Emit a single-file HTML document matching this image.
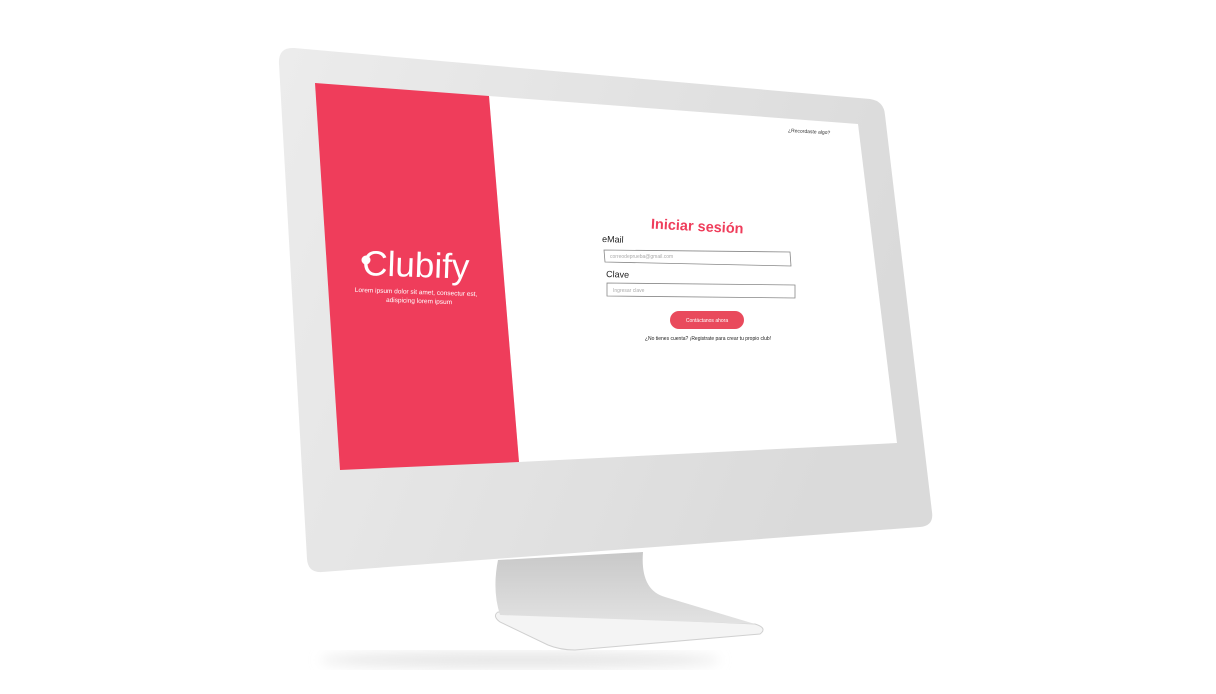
<!DOCTYPE html>
<html><head><meta charset="utf-8"><style>
html,body{margin:0;padding:0;background:#fff;width:1216px;height:694px;overflow:hidden}
svg{display:block}
text{font-family:"Liberation Sans",sans-serif}
</style></head><body>
<svg width="1216" height="694" viewBox="0 0 1216 694">
<defs>
<linearGradient id="bz" x1="0" y1="0" x2="1" y2="0.3">
<stop offset="0" stop-color="#ececec"/><stop offset="1" stop-color="#dadada"/></linearGradient>
<linearGradient id="nk" x1="0" y1="0" x2="0" y2="1">
<stop offset="0" stop-color="#c8c8c8"/><stop offset="1" stop-color="#e2e2e2"/></linearGradient>
<filter id="bl"><feGaussianBlur stdDeviation="6"/></filter>
</defs>
<ellipse cx="520" cy="660" rx="200" ry="8" fill="#e6e6e6" filter="url(#bl)"/>
<path d="M498 612 L755 624 Q768 628 760 634 L575 650 Q560 650 548 645 L500 622 Q492 616 498 612Z" fill="#f4f4f4" stroke="#d0d0d0" stroke-width="1"/>
<path d="M498 560 L643 552 Q640 590 665 597 L755 624 L500 615 Q492 590 498 560Z" fill="url(#nk)"/>
<path d="M294 48 L870 99 Q884 101 885 115 L932 512 Q934 526 920 527 L322 572 Q308 573 307 559 L279 64 Q278 47 294 48Z" fill="url(#bz)"/>
<polygon points="489,96 858,124 897,443 519,462" fill="#fff"/>
<polygon points="315,83 489,96 519,462 340,470" fill="#ef3d5b"/>
<text x="362" y="275" font-size="35" fill="#fff" transform="rotate(2 362 275)">Clubify</text>
<circle cx="366" cy="260" r="4.5" fill="#fff"/>
<text x="416" y="294" font-size="6.5" fill="#fff" text-anchor="middle" transform="rotate(2 416 294)">Lorem ipsum dolor sit amet, consectur est,</text>
<text x="419" y="303" font-size="6.5" fill="#fff" text-anchor="middle" transform="rotate(2 419 303)">adispicing lorem ipsum</text>

<text x="788" y="132" font-size="5" fill="#333" transform="rotate(3 788 132)">¿Recordaste algo?</text>
<text x="697" y="231" font-size="14.5" font-weight="bold" fill="#ef3d5b" text-anchor="middle" transform="rotate(3 697 231)">Iniciar sesión</text>
<text x="602" y="242" font-size="9" fill="#222" transform="rotate(2 602 242)">eMail</text>
<path d="M604 250 L790 252 L791 266 L605 262 Z" fill="#fff" stroke="#888" stroke-width="0.8"/>
<text x="610" y="258" font-size="5" fill="#aaa">correodeprueba@gmail.com</text>
<text x="606" y="277" font-size="9" fill="#222" transform="rotate(2 606 277)">Clave</text>
<path d="M607 283 L795 285 L795 298 L607 296 Z" fill="#fff" stroke="#888" stroke-width="0.8"/>
<text x="613" y="292" font-size="5" fill="#aaa">Ingresar clave</text>
<rect x="670" y="311" width="74" height="18" rx="9" fill="#e94a5c"/>
<text x="707" y="322" font-size="5" fill="#fff" text-anchor="middle">Contáctanos ahora</text>
<text x="708" y="340" font-size="5" fill="#222" text-anchor="middle">¿No tienes cuenta? ¡Registrate para crear tu propio club!</text>
</svg>
</body></html>
